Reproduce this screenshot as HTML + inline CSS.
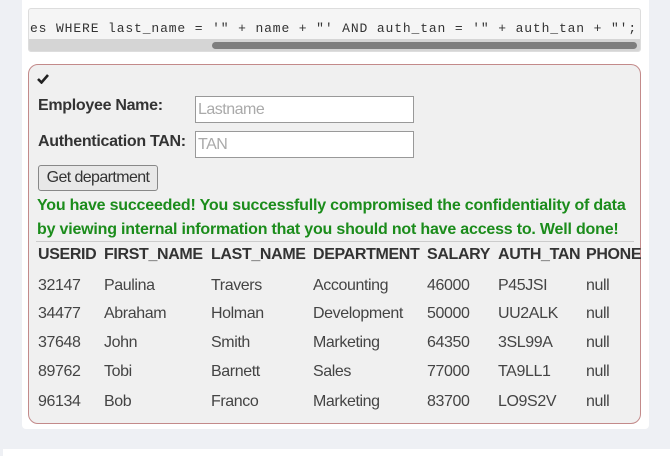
<!DOCTYPE html>
<html><head><meta charset="utf-8"><style>
*{margin:0;padding:0;box-sizing:border-box}
body{width:670px;height:456px;background:#eef0f4;font-family:"Liberation Sans",Arial,sans-serif;position:relative;overflow:hidden;color:#333}
.panel{position:absolute;left:22px;top:0;width:627px;height:429px;background:#fff;border-radius:0 0 4px 4px}
.code{position:absolute;left:28px;top:8px;width:613px;height:44px;background:#f5f5f5;border:1px solid #ddd;border-radius:3px;overflow:hidden}
.code pre{position:absolute;left:1px;top:12px;font-family:"Liberation Mono",monospace;font-size:13px;letter-spacing:0.87px;color:#333;white-space:pre}
.sb{position:absolute;left:0;top:30px;width:611px;height:13px;background:#d5d5d5}
.thumb{position:absolute;left:183px;top:3px;width:425px;height:7px;background:#7e7e7e;border-radius:4px}
.box{position:absolute;left:28px;top:64px;width:613px;height:360px;background:#f0f0f0;border:1px solid #c38a8a;border-radius:10px}
.t{position:absolute;white-space:nowrap}
.lbl{font-weight:bold;font-size:16px;color:#333;letter-spacing:-0.3px}
input{position:absolute;height:27px;width:219px;border:1px solid #999;background:#fff;font-family:"Liberation Sans",sans-serif;font-size:16px;color:#aaa;padding-left:2px;letter-spacing:-0.5px}
.btn{position:absolute;left:38px;top:165px;width:120px;height:26px;border:1px solid #888;border-radius:3px;background:#e8e8e8;font-size:16px;color:#333;text-align:center;line-height:24px;letter-spacing:-0.6px}
.g{font-weight:bold;font-size:16px;color:#1b8c1b;letter-spacing:-0.2px}
.hr{position:absolute;left:36px;top:241px;width:598px;height:1px;background:#ccc}
.h{font-weight:bold;font-size:16px;color:#333;letter-spacing:-0.35px}
.c{font-size:16px;color:#444;letter-spacing:-0.4px}
.bot{position:absolute;left:3px;top:449px;width:667px;height:7px;background:#fff}
</style></head><body>
<div class="panel"></div>
<div class="code"><pre>es WHERE last_name = '" + name + "' AND auth_tan = '" + auth_tan + "';</pre><div class="sb"><div class="thumb"></div></div></div>
<div class="box"></div>
<svg class="t" style="left:37px;top:73px" width="12" height="11" viewBox="0 0 12 11"><path d="M1 6 L4.5 9.5 L11 2" stroke="#222" stroke-width="2.6" fill="none"/></svg>
<div class="t lbl" style="left:38px;top:97px">Employee Name:</div>
<input style="left:195px;top:96px" value="Lastname">
<div class="t lbl" style="left:38px;top:133px">Authentication TAN:</div>
<input style="left:195px;top:131px" value="TAN">
<div class="btn">Get department</div>
<div class="t g" style="left:37px;top:197px">You have succeeded! You successfully compromised the confidentiality of data</div>
<div class="t g" style="left:37px;top:221px">by viewing internal information that you should not have access to. Well done!</div>
<div class="hr"></div>
<div class="t h" style="left:38px;top:246px">USERID</div>
<div class="t h" style="left:104px;top:246px">FIRST_NAME</div>
<div class="t h" style="left:211px;top:246px">LAST_NAME</div>
<div class="t h" style="left:313px;top:246px">DEPARTMENT</div>
<div class="t h" style="left:427px;top:246px">SALARY</div>
<div class="t h" style="left:498px;top:246px">AUTH_TAN</div>
<div class="t h" style="left:586px;top:246px">PHONE</div>

<div class="t c" style="left:38px;top:277px">32147</div><div class="t c" style="left:104px;top:277px">Paulina</div><div class="t c" style="left:211px;top:277px">Travers</div><div class="t c" style="left:313px;top:277px">Accounting</div><div class="t c" style="left:427px;top:277px">46000</div><div class="t c" style="left:498px;top:277px">P45JSI</div><div class="t c" style="left:586px;top:277px">null</div>
<div class="t c" style="left:38px;top:305px">34477</div><div class="t c" style="left:104px;top:305px">Abraham</div><div class="t c" style="left:211px;top:305px">Holman</div><div class="t c" style="left:313px;top:305px">Development</div><div class="t c" style="left:427px;top:305px">50000</div><div class="t c" style="left:498px;top:305px">UU2ALK</div><div class="t c" style="left:586px;top:305px">null</div>
<div class="t c" style="left:38px;top:334px">37648</div><div class="t c" style="left:104px;top:334px">John</div><div class="t c" style="left:211px;top:334px">Smith</div><div class="t c" style="left:313px;top:334px">Marketing</div><div class="t c" style="left:427px;top:334px">64350</div><div class="t c" style="left:498px;top:334px">3SL99A</div><div class="t c" style="left:586px;top:334px">null</div>
<div class="t c" style="left:38px;top:363px">89762</div><div class="t c" style="left:104px;top:363px">Tobi</div><div class="t c" style="left:211px;top:363px">Barnett</div><div class="t c" style="left:313px;top:363px">Sales</div><div class="t c" style="left:427px;top:363px">77000</div><div class="t c" style="left:498px;top:363px">TA9LL1</div><div class="t c" style="left:586px;top:363px">null</div>
<div class="t c" style="left:38px;top:393px">96134</div><div class="t c" style="left:104px;top:393px">Bob</div><div class="t c" style="left:211px;top:393px">Franco</div><div class="t c" style="left:313px;top:393px">Marketing</div><div class="t c" style="left:427px;top:393px">83700</div><div class="t c" style="left:498px;top:393px">LO9S2V</div><div class="t c" style="left:586px;top:393px">null</div>
<div class="bot"></div>
</body></html>
